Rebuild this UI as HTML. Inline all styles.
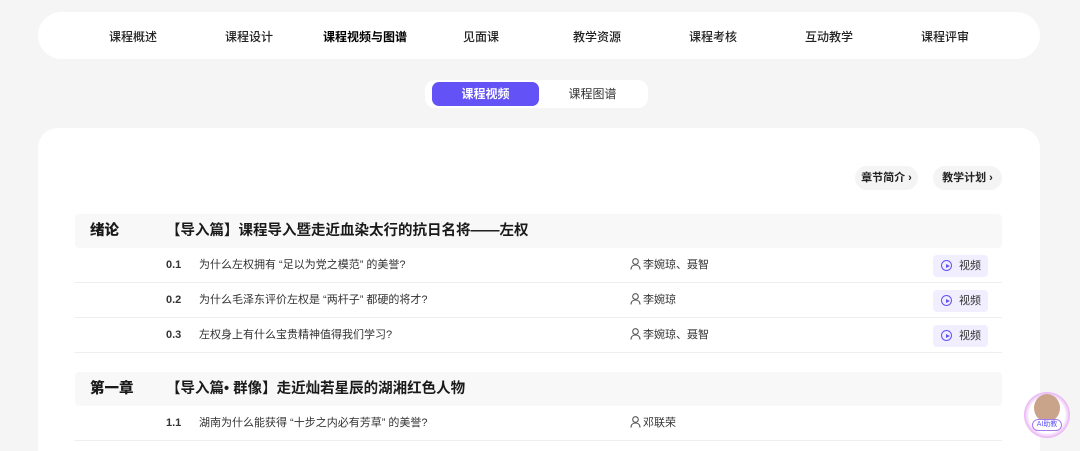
<!DOCTYPE html>
<html><head><meta charset="utf-8"><style>
*{margin:0;padding:0;box-sizing:border-box}
html,body{width:1080px;height:451px;overflow:hidden}
body{background:#f5f5f5;font-family:"Liberation Sans","Noto Sans CJK SC",sans-serif;color:#222;position:relative}
.nav{position:absolute;left:38px;top:12px;width:1002px;height:47px;background:#fff;border-radius:24px}
.nav span{position:absolute;top:16px;font-size:12px;transform:translateX(-50%);white-space:nowrap;color:#222;font-weight:500}
.tabs{position:absolute;left:425px;top:80px;width:223px;height:28px;background:#fff;border-radius:10px}
.t1{position:absolute;left:7px;top:2px;width:107px;height:24px;background:#6353f6;border-radius:7px;color:#fff;font-size:12px;font-weight:bold;text-align:center;line-height:24px}
.t2{position:absolute;left:114px;top:2px;width:107px;height:24px;color:#333;font-size:12px;text-align:center;line-height:24px}
.card{position:absolute;left:38px;top:128px;width:1002px;height:340px;background:#fff;border-radius:20px}
.pill{position:absolute;top:166px;height:24px;background:#f4f4f4;border-radius:12px;font-size:11px;font-weight:bold;line-height:24px;text-align:center}
.ch{position:absolute;left:75px;width:927px;height:34px;background:#f8f8f8;border-radius:4px;font-size:14.5px;font-weight:bold;line-height:34px;color:#1a1a1a}
.ch b{position:absolute;left:15px}.ch i{position:absolute;left:91px;font-style:normal}
.row{position:absolute;left:75px;width:927px;height:35px;border-bottom:1px solid #eee;font-size:11px;line-height:35px}
.row .n{position:absolute;left:91px;font-weight:bold;color:#333}
.row .q{position:absolute;left:124px;color:#333}
.row .a{position:absolute;left:555px;color:#333}
.row .a svg{vertical-align:-2px;margin-right:2px}
.row .v{position:absolute;left:858px;top:7px;width:55px;height:22px;background:#f0eeff;border-radius:4px;line-height:22px;font-size:11px;padding-left:26px;color:#333}
.row .v:before{content:"";position:absolute;left:8px;top:5px;width:9px;height:9px;border:1.5px solid #6353f6;border-radius:50%}
.row .v:after{content:"";position:absolute;left:13px;top:8.5px;border-left:4px solid #6353f6;border-top:2.5px solid transparent;border-bottom:2.5px solid transparent}
</style></head><body>
<div class="nav">
<span style="left:95px">课程概述</span><span style="left:211px">课程设计</span><span style="left:327px;font-weight:bold;color:#000">课程视频与图谱</span><span style="left:443px">见面课</span><span style="left:559px">教学资源</span><span style="left:675px">课程考核</span><span style="left:791px">互动教学</span><span style="left:907px">课程评审</span>
</div>
<div class="tabs"><div class="t1">课程视频</div><div class="t2">课程图谱</div></div>
<div class="card"></div>
<div class="pill" style="left:855px;width:63px">章节简介 ›</div>
<div class="pill" style="left:933px;width:69px">教学计划 ›</div>
<div class="ch" style="top:214px"><b>绪论</b><i>【导入篇】课程导入暨走近血染太行的抗日名将——左权</i></div>
<div class="row" style="top:248px"><span class="n">0.1</span><span class="q">为什么左权拥有 “足以为党之模范” 的美誉?</span><span class="a"><svg width="11" height="12" viewBox="0 0 11 12"><circle cx="5.5" cy="3.5" r="2.8" fill="none" stroke="#555" stroke-width="1.1"/><path d="M1 11.5c0-3 2-4.5 4.5-4.5s4.5 1.5 4.5 4.5" fill="none" stroke="#555" stroke-width="1.1"/></svg>李婉琼、聂智</span><span class="v">视频</span></div>
<div class="row" style="top:283px"><span class="n">0.2</span><span class="q">为什么毛泽东评价左权是 “两杆子” 都硬的将才?</span><span class="a"><svg width="11" height="12" viewBox="0 0 11 12"><circle cx="5.5" cy="3.5" r="2.8" fill="none" stroke="#555" stroke-width="1.1"/><path d="M1 11.5c0-3 2-4.5 4.5-4.5s4.5 1.5 4.5 4.5" fill="none" stroke="#555" stroke-width="1.1"/></svg>李婉琼</span><span class="v">视频</span></div>
<div class="row" style="top:318px"><span class="n">0.3</span><span class="q">左权身上有什么宝贵精神值得我们学习?</span><span class="a"><svg width="11" height="12" viewBox="0 0 11 12"><circle cx="5.5" cy="3.5" r="2.8" fill="none" stroke="#555" stroke-width="1.1"/><path d="M1 11.5c0-3 2-4.5 4.5-4.5s4.5 1.5 4.5 4.5" fill="none" stroke="#555" stroke-width="1.1"/></svg>李婉琼、聂智</span><span class="v">视频</span></div>
<div class="ch" style="top:372px"><b>第一章</b><i>【导入篇• 群像】走近灿若星辰的湖湘红色人物</i></div>
<div class="row" style="top:406px"><span class="n">1.1</span><span class="q">湖南为什么能获得 “十步之内必有芳草” 的美誉?</span><span class="a"><svg width="11" height="12" viewBox="0 0 11 12"><circle cx="5.5" cy="3.5" r="2.8" fill="none" stroke="#555" stroke-width="1.1"/><path d="M1 11.5c0-3 2-4.5 4.5-4.5s4.5 1.5 4.5 4.5" fill="none" stroke="#555" stroke-width="1.1"/></svg>邓联荣</span></div>
<div style="position:absolute;left:1024px;top:392px;width:46px;height:46px;border-radius:50%;background:radial-gradient(circle,#fff 55%,#e9b4f5 70%,#fff 85%)">
<div style="position:absolute;left:10px;top:2px;width:26px;height:28px;border-radius:50%;background:#c9a48a"></div>
<div style="position:absolute;left:8px;top:27px;width:30px;height:12px;border-radius:6px;background:#fff;border:1px solid #a77af0;font-size:7px;color:#6353f6;text-align:center;line-height:10px">AI助教</div>
</div>
</body></html>
